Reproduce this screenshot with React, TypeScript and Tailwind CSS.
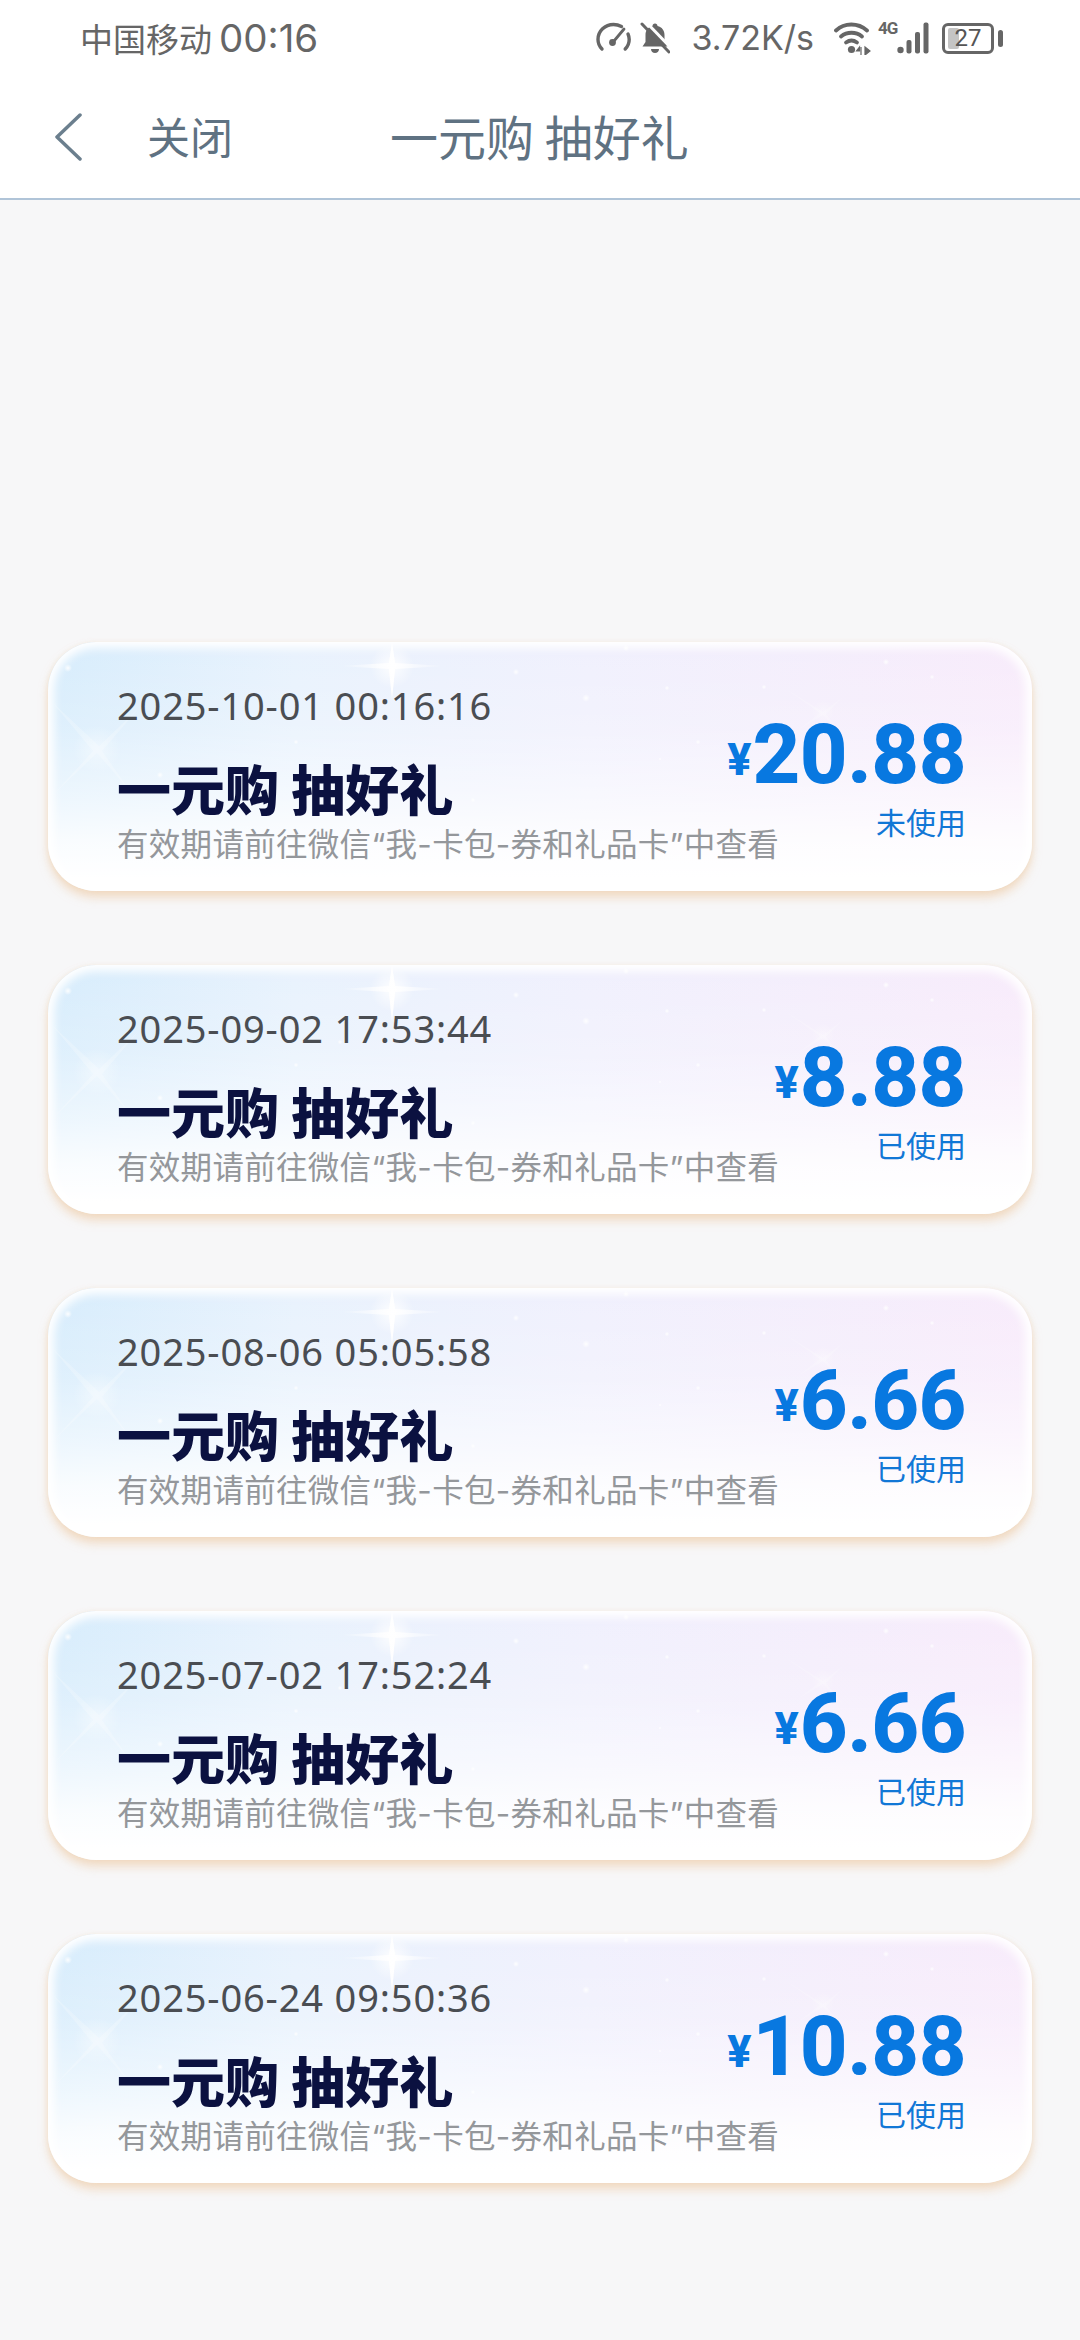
const cjk = "font-['Noto_Sans_CJK_SC','Noto_Sans',sans-serif]";

const items = [
  { date: '2025-10-01 00:16:16', amount: '20.88', status: '未使用' },
  { date: '2025-09-02 17:53:44', amount: '8.88', status: '已使用' },
  { date: '2025-08-06 05:05:58', amount: '6.66', status: '已使用' },
  { date: '2025-07-02 17:52:24', amount: '6.66', status: '已使用' },
  { date: '2025-06-24 09:50:36', amount: '10.88', status: '已使用' },
];

function Gauge() {
  return (
    <svg width="35" height="32" viewBox="0 0 35 32" fill="none" stroke="#666" strokeWidth="3.4" strokeLinecap="round">
      <path d="M6 27C3.500 24.500 2 21.500 2 17.500 2 9 9 2.500 17.500 2.500c3 0 5.500.7 8 2" />
      <path d="M32 12c.8 1.800 1.200 3.600 1.200 5.500 0 3.800-1.500 7-4 9.500" strokeLinejoin="round" />
      <path d="M28 7l-10 12" strokeWidth="2.800" />
      <circle cx="16.500" cy="20.500" r="3.400" fill="#666" stroke="none" />
    </svg>
  );
}

function Bell() {
  return (
    <svg width="30" height="33" viewBox="0 0 30 33" fill="none">
      <path d="M15 1.500c1.500 0 2.500 1 2.500 2.500 4.500 1 7 4.500 7 9v7l3 4.500H2.500l3-4.500v-7c0-4.500 2.500-8 7-9 0-1.500 1-2.500 2.500-2.500z" fill="#666" />
      <path d="M11 27h8c0 2.500-1.800 4-4 4s-4-1.500-4-4z" fill="#666" />
      <path d="M5 -1l27 28" stroke="#fff" strokeWidth="3" />
      <path d="M2 2l27 28" stroke="#666" strokeWidth="3" strokeLinecap="round" />
    </svg>
  );
}

function Wifi() {
  return (
    <svg width="38" height="33" viewBox="0 0 38 33" fill="none" stroke="#666" strokeLinecap="round">
      <path d="M2 8.500C10.500.5 24 .5 33 8.500" strokeWidth="3.800" />
      <path d="M7 14.500c6-5 15-5 21 0" strokeWidth="3.800" />
      <path d="M12 20.500c3.500-2.500 7.500-2.500 11 0" strokeWidth="3.800" />
      <circle cx="17.500" cy="27.500" r="3.600" fill="#666" stroke="none" />
      <path d="M25.500 25l-3 4h3zM27 25v8" fill="#666" stroke="#666" strokeWidth="1.200" strokeLinecap="butt" />
      <path d="M31 25v8M31 25l5 4-5 4z" fill="#666" stroke="#666" strokeWidth="1.200" strokeLinecap="butt" />
    </svg>
  );
}

function Signal() {
  return (
    <svg width="33" height="32" viewBox="0 0 33 32">
      <circle cx="3.500" cy="28" r="3.200" fill="#666" />
      <rect x="9.500" y="18" width="5" height="13.500" rx="2" fill="#666" />
      <rect x="18" y="10" width="5" height="21.500" rx="2" fill="#666" />
      <rect x="26.500" y="0.500" width="5" height="31" rx="2" fill="#666" />
    </svg>
  );
}

function Battery() {
  return (
    <div className="flex items-center">
      <div className="relative flex h-[31px] w-[52px] items-center justify-center rounded-[6px] border-[3px] border-[#666] text-[24px] leading-none text-[#555]">
        <div className="absolute left-[3px] top-[2px] h-[21px] w-[11px] rounded-[2px] bg-[#c4c4c4]" />
        <span className="relative font-['Roboto',sans-serif]">27</span>
      </div>
      <div className="ml-[4px] h-[17px] w-[5px] rounded-full bg-[#666]" />
    </div>
  );
}

function Sparkles() {
  const dots = [
    [20, 26, 2.5], [468, 30, 2], [578, 6, 2], [248, 100, 1.5], [292, 77, 1.5], [112, 133, 2], [538, 56, 2.5],
    [619, 46, 1.5], [716, 45, 1.5], [838, 20, 2], [884, 35, 1.5], [650, 100, 1.5], [612, 117, 1], [425, 158, 1.5],
  ];
  return (
    <svg className="pointer-events-none absolute inset-0" width="986" height="249" viewBox="0 0 986 249" fill="none">
      <defs>
        <radialGradient id="sparkleGlow">
          <stop offset="0" stopColor="#fff" stopOpacity="0.9" />
          <stop offset="1" stopColor="#fff" stopOpacity="0" />
        </radialGradient>
        <linearGradient id="sparkleH">
          <stop offset="0" stopColor="#fff" stopOpacity="0" />
          <stop offset="0.5" stopColor="#fff" stopOpacity="0.95" />
          <stop offset="1" stopColor="#fff" stopOpacity="0" />
        </linearGradient>
        <linearGradient id="sparkleV" x1="0" y1="0" x2="0" y2="1">
          <stop offset="0" stopColor="#fff" stopOpacity="0" />
          <stop offset="0.5" stopColor="#fff" stopOpacity="0.95" />
          <stop offset="1" stopColor="#fff" stopOpacity="0" />
        </linearGradient>
      </defs>
      <circle cx="344" cy="24" r="22" fill="url(#sparkleGlow)" />
      <path d="M344 0l3 21 50 3-50 3-3 30-3-30-50-3 50-3z" fill="url(#sparkleH)" />
      <path d="M344 0l3 21 3 3-3 3-3 30-3-30-3-3 3-3z" fill="url(#sparkleV)" />
      <circle cx="49" cy="107" r="24" fill="url(#sparkleGlow)" opacity="0.45" />
      <path d="M4 60l47 44 40-38-37 43 28 40-33-38-44 42 40-44z" fill="#fff" opacity="0.22" />
      <circle cx="775" cy="70" r="12" fill="url(#sparkleGlow)" opacity="0.3" />
      <path d="M735 45l40 25 20-15-17 17 20 25-23-24-25 15 22-17z" fill="#fff" opacity="0.2" />
      {dots.map(([x, y, r], i) => (
        <circle key={i} cx={x} cy={y} r={r * 1.6} fill="url(#sparkleGlow)" />
      ))}
    </svg>
  );
}

function Card({ date, amount, status }: { date: string; amount: string; status: string }) {
  return (
    <div className="relative flex h-[249px] justify-between overflow-hidden rounded-[48px] bg-[linear-gradient(180deg,rgba(255,255,255,0)_0%,rgba(255,255,255,0.2)_35%,rgba(255,255,255,0.55)_62%,rgba(255,255,255,0.85)_80%,#ffffff_95%),linear-gradient(90deg,#d6ecfc_0%,#e8f2fd_25%,#f0f0fd_55%,#f8ebfb_100%)] pl-[69px] pr-[66px] shadow-[inset_0_0_10px_6px_#ffffff]">
      <Sparkles />
      <div className="relative flex min-w-0 flex-1 flex-col whitespace-nowrap pt-[39px]">
        <div className="h-[48px] font-['Noto_Sans','Noto_Sans_CJK_SC',sans-serif] text-[38px] leading-[48px] tracking-[0.85px] text-[#4a4d52]">{date}</div>
        <div className="mt-[27px] h-[64px] font-['Noto_Sans_CJK_SC',sans-serif] text-[54px] font-black leading-[64px] text-[#0b1140]">一元购 抽好礼</div>
        <div className="mt-[5px] h-[40px] font-['Inter','Noto_Sans_CJK_SC',sans-serif] text-[31.500px] leading-[40px] tracking-[0.3px] text-[#94979b]">有效期请前往微信“我-卡包-券和礼品卡”中查看</div>
      </div>
      <div className="relative flex shrink-0 flex-col items-end whitespace-nowrap pt-[77px]">
        <div className="flex h-[72px] items-baseline font-['Roboto',sans-serif] font-extrabold text-[#0878e0]">
          <span className="mr-[1px] -translate-y-[8px] text-[45px] leading-[72px]">¥</span>
          <span className="text-[83px] leading-[72px] tracking-[-0.5px]">{amount}</span>
        </div>
        <div className={`mt-[10px] h-[40px] text-[30px] leading-[40px] text-[#1177d6] ${cjk}`}>{status}</div>
      </div>
    </div>
  );
}

export default function App() {
  return (
    <div className={`flex h-[2340px] w-[1080px] flex-col overflow-hidden bg-[#f7f7f8] ${cjk}`}>
      <header className="h-[200px] border-b-[2px] border-[#b0c4d8] bg-white">
        <div className="flex h-[76px] items-center pl-[80px] pr-[77px] text-[#666]">
          <span className="text-[33px] leading-none">中国移动</span>
          <span className="ml-[7px] font-['Inter',sans-serif] text-[38.500px] leading-none">00:16</span>
          <div className="ml-auto flex items-center">
            <Gauge />
            <div className="ml-[9px]"><Bell /></div>
            <span className="ml-[21px] font-['Inter',sans-serif] text-[34px] leading-none">3.72K/s</span>
            <div className="ml-[20px]"><Wifi /></div>
            <div className="relative ml-[25px]">
              <span className="absolute left-[-19px] top-[-2px] font-['Roboto',sans-serif] text-[17px] font-bold leading-none tracking-[-1px]">4G</span>
              <Signal />
            </div>
            <div className="ml-[12px]"><Battery /></div>
          </div>
        </div>
        <div className="flex h-[122px] items-center text-[#5f7282]">
          <svg className="ml-[53px]" width="30" height="48" viewBox="0 0 30 48" fill="none" stroke="#6b7f8e" strokeWidth="3.500" strokeLinecap="round" strokeLinejoin="round">
            <path d="M27 2L4 24l23 22" />
          </svg>
          <span className="mb-[4px] ml-[64px] text-[43px] leading-none">关闭</span>
          <span className="mb-[4px] ml-[157px] text-[48px] leading-none">一元购 抽好礼</span>
        </div>
      </header>
      <main className="flex flex-col gap-[74px] px-[48px] pt-[442px]">
        {items.map((it) => (
          <div key={it.date} className="rounded-[48px] shadow-[0_7px_10px_rgba(238,205,170,0.6),0_1px_5px_rgba(240,220,195,0.55)]">
            <Card {...it} />
          </div>
        ))}
      </main>
    </div>
  );
}
